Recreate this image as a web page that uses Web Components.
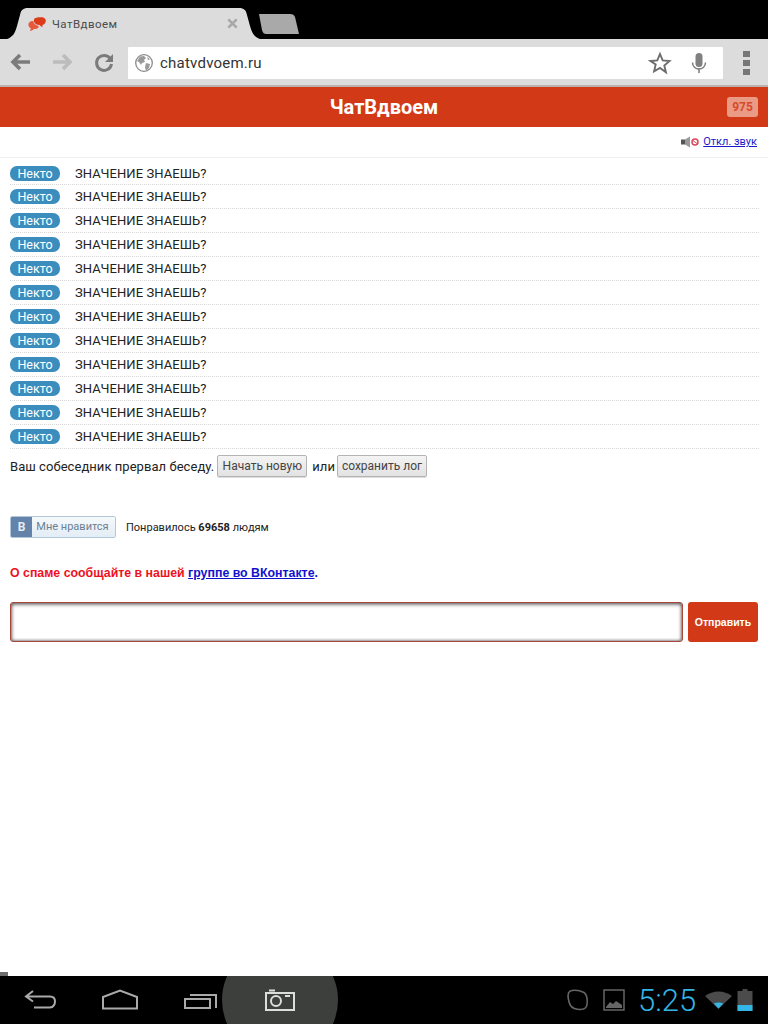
<!DOCTYPE html>
<html><head><meta charset="utf-8">
<style>
html,body{margin:0;padding:0;height:100%;background:#fff;font-family:Roboto,"Liberation Sans",sans-serif}
tablet-shell{height:1024px}
</style></head><body>
<tablet-shell>
  <tab-strip slot="top" title-text="ЧатВдвоем"></tab-strip>
  <browser-bar slot="top" url="chatvdvoem.ru"></browser-bar>
  <chat-page slot="page"></chat-page>
  <system-bar slot="bottom"></system-bar>
</tablet-shell>
<script>
function def(name,html,init){
  customElements.define(name,class extends HTMLElement{
    constructor(){super();this.attachShadow({mode:'open'}).innerHTML=typeof html==='function'?html(this):html;}
    connectedCallback(){if(init)init(this,this.shadowRoot);}
  });
}
def('tablet-shell',`<style>
:host{display:flex;flex-direction:column;width:768px;position:relative;overflow:hidden}
.page{flex:1;min-height:0;display:flex;flex-direction:column}
.mark{position:absolute;left:0;bottom:48px;width:8px;height:4px;background:#6d6d6d}
</style><slot name="top"></slot><div class="page"><slot name="page"></slot></div><div class="mark"></div><slot name="bottom"></slot>`);

def('tab-strip',`<style>
:host{display:flex;height:39px;background:#000;align-items:flex-end;padding-left:7px;box-sizing:border-box;font-family:Roboto,sans-serif}
.tab{width:253px;height:31px;background:#dcdcdc;box-sizing:border-box;display:flex;align-items:center;padding:0 21px;
clip-path:path('M0 31 C6 29 8 25 10 18 L13 7 C14 2 16 0 21 0 L232 0 C237 0 239 2 240 7 L243 18 C245 25 247 29 253 31 Z')}
svg.fav{width:18px;height:14px;flex:none;margin-top:1px}
.t{margin-left:6px;font-size:11.5px;color:#4b4b4b;flex:1;letter-spacing:.45px}
svg.x{width:11px;height:11px;margin-right:1px}
.new{width:40px;height:20px;background:#a9a9a9;margin:0 0 5px -1px;clip-path:path('M0 0 L31 0 C34 0 35 1 36 3 L40 20 L7 20 C5 20 4 19 3 16 Z')}
</style>
<div class="tab">
<svg class="fav" viewBox="0 0 18 14"><path fill="#dc3b1a" d="M6.500 1.500C8 .3 12 0 14.500.3c2 .3 3.300 1.700 3.300 3.500 0 2-1.500 3.800-3.300 4.200-.3.800-.3 1.500 0 2.300-1.200-.5-2.300-1.300-3-2.200-2.500 0-5-1.300-5.500-3.300-.3-1.300-.2-2.300.5-3.300z"/><path fill="#e8583a" d="M1.200 5.500C2.300 4.300 3.800 3.800 5.200 4c.3 2.500 2.500 4.500 5 4.800.4.300.5 1 .2 1.700-.7 1-2.500 1.500-4.400 1.500C5 13 3.500 13.800 1.800 14c.8-1 1-2 .8-3C.5 10 -.3 7.300 1.200 5.500z"/></svg>
<span class="t"></span>
<svg class="x" viewBox="0 0 11 11"><path d="M1.300 1.300 9.700 9.700M9.700 1.300 1.300 9.700" stroke="#a8a8a8" stroke-width="2.600"/></svg>
</div><div class="new"></div>`,(h,s)=>{s.querySelector('.t').textContent=h.getAttribute('title-text')});

def('browser-bar',`<style>
:host{display:block;height:48px;box-sizing:border-box;background:#dcdcdc;border-bottom:2px solid #b9b1ad;font-family:Roboto,sans-serif}
.r{display:flex;align-items:center;height:46px;box-sizing:border-box;padding:0 0 2px 10px}
.nav{display:flex;gap:19px;width:118px;flex:none;margin-top:2px}
.nav svg{width:22px;height:22px;display:block}
.nav svg:last-child{margin-left:1px}
.box{width:595px;height:32px;margin-top:4px;background:#fff;border-radius:1px;display:flex;align-items:center;box-sizing:border-box;padding:0 14px 0 6px;flex:none}
.u{flex:1;margin-left:6px;font-size:15px;color:#333;letter-spacing:.22px}
.glob{width:20px;height:20px}
.star{width:24px;height:24px;margin-right:17px}.mic{width:20px;height:24px}
.menu{flex:none;margin-left:20px;width:7px;display:flex;flex-direction:column;gap:3px;margin-top:4px}
.menu i{display:block;width:7px;height:6px;background:#777}
</style><div class="r"><div class="nav">
<svg viewBox="0 0 22 22"><path d="M10 4 3 11l7 7M3.500 11H20" fill="none" stroke="#7b7b7b" stroke-width="3.600"/></svg>
<svg viewBox="0 0 22 22"><path d="M12 4l7 7-7 7M18.500 11H2" fill="none" stroke="#bcbcbc" stroke-width="3.600"/></svg>
<svg viewBox="0 0 22 22"><path d="M17.500 8A7.500 7.500 0 1 0 18.500 13" fill="none" stroke="#7b7b7b" stroke-width="3"/><path d="M20 3v8h-8z" fill="#7b7b7b"/></svg>
</div><div class="box">
<svg class="glob" viewBox="0 0 20 20"><circle cx="10" cy="10" r="8.300" fill="#fff" stroke="#8a8a8a" stroke-width="1.300"/><path fill="#9a9a9a" d="M6 3.500 10 3l2 2-2 2 1 2-3 1-1 2-2-3-2-1zM12 10l4 1-1 4-3 3-1-4zM13 3.500l3 3-2 .5z"/></svg>
<span class="u"></span>
<svg class="star" viewBox="0 0 24 24"><path d="M12 3l2.700 6.400 6.800.6-5.200 4.500 1.600 6.800L12 17l-5.900 3.300 1.600-6.800L2.500 10l6.800-.6z" fill="none" stroke="#6d6d6d" stroke-width="1.900"/></svg>
<svg class="mic" viewBox="0 0 20 24"><rect x="6.500" y="2" width="7" height="14" rx="3.500" fill="#808080"/><path d="M3.500 11.500c0 4 3 6.500 6.500 6.500s6.500-2.500 6.500-6.500" fill="none" stroke="#808080" stroke-width="1.500"/><path d="M9.200 17h1.600v5H9.200z" fill="#808080"/></svg>
</div><div class="menu"><i></i><i></i><i></i></div></div>`,(h,s)=>{s.querySelector('.u').textContent=h.getAttribute('url')});

def('app-header',`<style>
:host{display:flex;height:40px;background:#d23a17;position:relative;align-items:center;justify-content:center;color:#fff;font:700 20px Roboto,sans-serif;flex:none}
.b{position:absolute;right:10px;top:10px;width:31px;height:20px;border-radius:3px;background:#ea9b86;color:#d8492a;font:700 12px/20px Roboto,sans-serif;text-align:center}
</style><slot></slot><span class="b">975</span>`);

def('sound-bar',`<style>
:host{display:flex;height:31px;box-sizing:border-box;border-bottom:1px solid #eef0f0;justify-content:flex-end;align-items:center;padding:0 11px 1px 0;font:11px Roboto,sans-serif;flex:none}
svg{width:18px;height:12px;margin-right:4px}
a{color:#1a1acb;text-decoration:underline}
</style>
<svg viewBox="0 0 18 12"><rect x="0" y="3.500" width="4" height="5" fill="#555"/><path d="M4 3.500 9 .5v11l-5-3z" fill="#999"/><circle cx="14" cy="6" r="3" fill="#fff" stroke="#d9485c" stroke-width="1.500"/><path d="M12 4.500l4 3" stroke="#d9485c"/></svg>
<a href="#"><slot></slot></a>`);

def('chat-line',`<style>
:host{display:flex;height:24px;box-sizing:border-box;margin:0 9px 0 10px;border-bottom:1px dotted #d6d6d6;align-items:center;font:13px Roboto,sans-serif;color:#222;letter-spacing:.08px}
:host(:first-child){height:23px;padding-top:1px}
.n{width:50px;height:15px;border-radius:7px;background:#3b8dbd;color:#fff;font-size:12.5px;line-height:15px;text-align:center;margin-right:15px;flex:none;letter-spacing:0}
</style><span class="n">Некто</span><slot></slot>`);

def('chat-end',`<style>
:host{display:flex;align-items:center;margin:6px 10px 0;height:22px;font:13px Roboto,sans-serif;color:#222;letter-spacing:.05px}
button{width:90px;height:22px;margin:0;padding:0;font:12px Roboto,sans-serif;color:#444;background:linear-gradient(#f4f4f4,#e2e2e2);border:1px solid #b4b4b4;border-radius:2px;box-shadow:0 1px 0 #ddd}
.a{margin:0 5px 0 3px}.b{margin:0 0 0 2px}
</style><slot name="lead"></slot><button class="a">Начать новую</button><span>или</span><button class="b">сохранить лог</button>`);

def('vk-like',`<style>
:host{display:flex;align-items:center;margin:39px 10px 0;height:22px;font:11px Roboto,sans-serif;color:#222}
.w{display:flex;height:22px;width:106px;border-radius:2px;overflow:hidden;box-sizing:border-box;border:1px solid #b4c6da;margin-right:10px}
.l{width:21px;background:#6383aa;color:#e6ecf3;font-weight:700;font-size:12px;line-height:20px;text-align:center}
.m{flex:1;background:linear-gradient(#f5f9fc,#e3edf5);color:#6b7f95;line-height:20px;text-align:center;padding-right:2px}
b{color:#222}
</style><div class="w"><div class="l">В</div><div class="m">Мне нравится</div></div><span>Понравилось <b>69658</b> людям</span>`);

def('spam-note',`<style>
:host{display:block;margin:25px 10px 0;height:20px;font:700 12.35px/20px "Liberation Sans",Arial,sans-serif;color:#ee1122}
a{color:#1111cc;text-decoration:underline}i{font-style:normal;color:#1111cc}
</style>О спаме сообщайте в нашей <a href="#">группе во ВКонтакте</a><i>.</i>`);

def('send-form',`<style>
:host{display:flex;margin:19px 10px 0;height:40px;gap:5px}
.i{width:673px;box-sizing:border-box;border:1px solid #a9453a;border-radius:3px;box-shadow:inset 0 1px 4px #555,inset 0 0 3px #777;background:#fff}
.s{width:70px;background:#d23a17;border-radius:3px;color:#fff;font:700 10.5px/40px "Liberation Sans",Arial,sans-serif;text-align:center}
</style><div class="i"></div><div class="s">Отправить</div>`);

def('chat-page',`<style>
:host{display:block;flex:1;background:#fff}
.list{display:block}
</style>
<app-header>ЧатВдвоем</app-header>
<sound-bar>Откл. звук</sound-bar>
<div class="list" id="l"></div>
<chat-end><span slot="lead">Ваш собеседник прервал беседу.</span></chat-end>
<vk-like></vk-like>
<spam-note></spam-note>
<send-form></send-form>`,(h,s)=>{
  const l=s.getElementById('l');
  if(l.children.length)return;
  for(let i=0;i<12;i++){const c=document.createElement('chat-line');c.textContent='ЗНАЧЕНИЕ ЗНАЕШЬ?';l.appendChild(c);}
  l.style.paddingTop='4px';
});

def('system-bar',`<style>
:host{display:flex;height:48px;background:#000;position:relative;overflow:hidden;align-items:center;font-family:Roboto,sans-serif;flex:none}
.glow{position:absolute;left:222px;top:-34px;width:116px;height:116px;border-radius:50%;background:radial-gradient(circle,#3d3f3d 0,#3d3f3d 92%,#2a2b2a 100%)}
svg{position:relative;display:block;flex:none}
.time{position:relative;font-weight:300;font-size:31px;color:#33b5e5;width:58px;margin-left:13px;white-space:nowrap}
</style><div class="glow"></div>
<svg style="margin-left:24px" width="33" height="22" viewBox="0 0 33 22"><path d="M9 2 2 7.500l7 5M3 7.500h23c4 0 5 2.500 5 5s-1.500 6-5 6H10" fill="none" stroke="#aaa" stroke-width="2"/></svg>
<svg style="margin-left:45px" width="36" height="22" viewBox="0 0 36 22"><path d="M1 8 18 1.500 35 8v11.500H1z" fill="none" stroke="#aaa" stroke-width="2"/></svg>
<svg style="margin-left:45px" width="36" height="22" viewBox="0 0 36 22"><path d="M2 10h25v9H2z" fill="none" stroke="#aaa" stroke-width="2"/><path d="M7 6h26v13" fill="none" stroke="#aaa" stroke-width="2"/></svg>
<svg style="margin-left:45px" width="32" height="22" viewBox="0 0 32 22"><path d="M2 4h28v17H2zM5 1.500h6" fill="none" stroke="#ddd" stroke-width="2"/><circle cx="12" cy="12" r="5" fill="none" stroke="#ddd" stroke-width="2"/><path d="M21 6h5v2h-5z" fill="#ddd"/></svg>
<svg style="margin-left:270px" width="24" height="24" viewBox="0 0 24 24"><path d="M6 2.500c4-.5 9 .5 12 2 3 2 3.500 8 3 12-.5 3.500-3 5-6.500 5-4 0-8-1-10-4C2.500 14 1.500 8 2.500 5 3 3.500 4.500 2.700 6 2.500z" fill="none" stroke="#666" stroke-width="1.600"/></svg>
<svg style="margin-left:13px" width="22" height="22" viewBox="0 0 22 22"><path d="M1 1h20v20H1z" fill="none" stroke="#666" stroke-width="1.500"/><path d="M3 18l4-5 3 2 3-3 3 2 3 2v3H3z" fill="#666"/></svg>
<span class="time">5:25</span>
<svg style="margin-left:9px" width="27" height="18" viewBox="0 0 27 18"><path d="M0 5C8-1 19-1 27 5L13.500 18z" fill="#4b4b4b"/><path d="M8.800 12.500c3-1.500 6.400-1.500 9.400 0l-4.700 5z" fill="#33b5e5"/></svg>
<svg style="margin-left:5px" width="16" height="22" viewBox="0 0 16 22"><path d="M5.500 0h5v2h5v20H.5V2h5z" fill="#4b4b4b"/><path d="M.5 16h15v6H.5z" fill="#33b5e5"/></svg>`);
</script>
</body></html>
